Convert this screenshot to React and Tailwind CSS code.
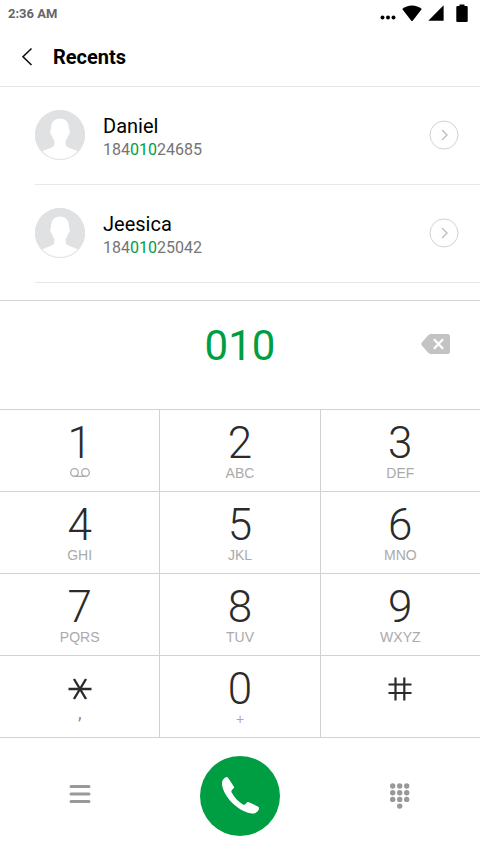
import React, { useState } from 'react';

const contacts = [
  { name: 'Daniel', number: '18401024685' },
  { name: 'Jeesica', number: '18401025042' },
];

const keys = [
  { digit: '1', letters: 'voicemail' },
  { digit: '2', letters: 'ABC' },
  { digit: '3', letters: 'DEF' },
  { digit: '4', letters: 'GHI' },
  { digit: '5', letters: 'JKL' },
  { digit: '6', letters: 'MNO' },
  { digit: '7', letters: 'PQRS' },
  { digit: '8', letters: 'TUV' },
  { digit: '9', letters: 'WXYZ' },
  { digit: '*', letters: ',' },
  { digit: '0', letters: '+' },
  { digit: '#', letters: '' },
];

const StatusBar = () => (
  <div className="flex h-7 items-center justify-between pl-2 pr-3">
    <span className="text-[13px] font-bold text-[#666666]">2:36 AM</span>
    <div className="flex items-center text-black">
      <svg className="mr-1.5 h-4 w-4" viewBox="0 0 16 16" fill="currentColor">
        <circle cx="2.5" cy="11.5" r="2" />
        <circle cx="8" cy="11.5" r="2" />
        <circle cx="13.5" cy="11.5" r="2" />
      </svg>
      <svg className="mr-1.5 h-5 w-5" viewBox="0 0 20 20" fill="currentColor">
        <path d="M0.2 5C5.5 0.2 14.5 0.2 19.8 5L10.9 16.4Q10 17.4 9.1 16.4Z" />
      </svg>
      <svg className="mr-3 h-5 w-4" viewBox="0 0 16 20" fill="currentColor">
        <path d="M15.6 1.3V16.8H0.3Z" />
      </svg>
      <svg className="h-5 w-3" viewBox="0 0 12 20" fill="currentColor">
        <path d="M3.5 0.5h5v1.5H10.5Q11.7 2 11.7 3.2V17Q11.7 18 10.7 18H1.3Q0.3 18 0.3 17V3.2Q0.3 2 1.5 2H3.5Z" />
      </svg>
    </div>
  </div>
);

const Avatar = () => (
  <svg className="h-[50px] w-[50px] shrink-0" viewBox="0 0 50 50">
    <circle cx="25" cy="25" r="25" fill="#dfe1e3" />
    <path
      d="M25 8.5C19 8.5 15.8 12.5 16.1 19.5C14.7 20 15 24.5 16.8 25.5C17.3 28 18.3 29.5 19.3 30.5V34C19.3 36.2 18 37 15 38.2C11 39.8 8 41 6.5 41.2A24.4 24.4 0 0 0 43.5 41.2C42 41 39 39.8 35 38.2C32 37 30.7 36.2 30.7 34V30.5C31.7 29.5 32.7 28 33.2 25.5C35 24.5 35.3 20 33.9 19.5C34.2 12.5 31 8.5 25 8.5Z"
      fill="#ffffff"
    />
    <circle cx="25" cy="25" r="24.5" fill="none" stroke="#dfe1e3" />
  </svg>
);

const MatchedNumber = ({ number, query }) => {
  const at = query ? number.indexOf(query) : -1;
  if (at < 0) return number;

  return (
    <>
      {number.slice(0, at)}
      <span className="text-[#009e42]">{query}</span>
      {number.slice(at + query.length)}
    </>
  );
};

const ContactRow = ({ contact, query }) => (
  <li className="ml-[35px] flex h-[98px] items-center border-b border-[#e8e8e8] pb-0.5 pr-[21px]">
    <Avatar />
    <div className="ml-[18px] flex-1 pt-1.5">
      <p className="text-xl leading-6 text-black">{contact.name}</p>
      <p className="text-base leading-6 text-[#757575]">
        <MatchedNumber number={contact.number} query={query} />
      </p>
    </div>
    <button aria-label={`${contact.name} details`} className="cursor-pointer">
      <svg className="h-[30px] w-[30px]" viewBox="0 0 30 30" fill="none">
        <circle cx="15" cy="15" r="14" stroke="#d2d2d2" strokeWidth="1" />
        <path d="M13 10L18 15L13 20" stroke="#bdbdbd" strokeWidth="1.4" />
      </svg>
    </button>
  </li>
);

const KeySymbol = ({ digit }) => {
  if (digit === '*') {
    return (
      <svg className="h-11 w-6" viewBox="0 0 24 44" fill="none" stroke="#2b2b2b" strokeWidth="2.4">
        <path d="M0.5 22H23.5M6 12L18 32M18 12L6 32" />
      </svg>
    );
  }
  if (digit === '#') {
    return (
      <svg className="h-11 w-6" viewBox="0 0 24 44" fill="none" stroke="#2b2b2b" strokeWidth="2.2">
        <path d="M0.5 17.5H23.5M0.5 26H23.5M7.5 10.5V33.5M16.3 10.5V33.5" />
      </svg>
    );
  }
  return <span className="text-[44px] leading-11 font-light text-[#2b2b2b]">{digit}</span>;
};

const KeyLetters = ({ letters }) => {
  if (letters === 'voicemail') {
    return (
      <svg className="h-4 w-5" viewBox="0 0 20 16" fill="none" stroke="#aaaaaa" strokeWidth="1.3">
        <circle cx="4.5" cy="7.5" r="3.8" />
        <circle cx="15.5" cy="7.5" r="3.8" />
        <path d="M4.5 11.3H15.5" />
      </svg>
    );
  }
  if (letters === ',') {
    return <span className="h-4 text-lg leading-1 text-[#888888]">,</span>;
  }
  return (
    <span className="h-4 font-['Liberation_Sans',sans-serif] text-sm leading-4 text-[#aaaaaa]">
      {letters}
    </span>
  );
};

export default function App() {
  const [query, setQuery] = useState('010');

  return (
    <div className="min-h-screen bg-white font-['Roboto',sans-serif]">
      <StatusBar />

      <header className="flex h-[59px] items-center border-b border-[#e4e4e4] pl-5">
        <button aria-label="Back" className="cursor-pointer">
          <svg className="h-5 w-4" viewBox="0 0 16 20" fill="none" stroke="#111111" strokeWidth="1.6">
            <path d="M11.5 1.5L3 9.7L11.5 18" />
          </svg>
        </button>
        <h1 className="ml-[17px] text-xl font-bold text-black">Recents</h1>
      </header>

      <ul className="pb-[17px]">
        {contacts.map((contact) => (
          <ContactRow key={contact.number} contact={contact} query={query} />
        ))}
      </ul>

      <div className="grid h-[109px] grid-cols-[1fr_auto_1fr] items-start border-t border-[#d6d6d6] pt-[21px]">
        <output className="col-start-2 text-[42px] leading-12 text-[#009e42]">{query}</output>
        <button
          aria-label="Delete digit"
          onClick={() => setQuery(query.slice(0, -1))}
          className="mr-[30px] mt-[11px] cursor-pointer justify-self-end"
        >
          <svg className="h-[22px] w-[29px]" viewBox="0 0 29 22">
            <path
              d="M10 1H26.5Q29 1 29 3.5V18.5Q29 21 26.5 21H10Q8.5 21 7.5 19.9L1 12.7Q-0.4 11 1 9.3L7.5 2.1Q8.5 1 10 1Z"
              fill="#c3c3c3"
            />
            <path
              d="M13.5 6.8L21.5 15.2M21.5 6.8L13.5 15.2"
              stroke="#ffffff"
              strokeWidth="2.2"
              strokeLinecap="round"
            />
          </svg>
        </button>
      </div>

      <div className="grid grid-cols-3 gap-px border-y border-[#d2d2d2] bg-[#d2d2d2]">
        {keys.map((key) => (
          <button
            key={key.digit}
            onClick={() => setQuery(query + key.digit)}
            className="flex cursor-pointer flex-col items-center bg-white pb-2.5 pt-[11px] active:bg-gray-100"
          >
            <KeySymbol digit={key.digit} />
            <KeyLetters letters={key.letters} />
          </button>
        ))}
      </div>

      <nav className="grid grid-cols-3 items-center justify-items-center pt-[18px]">
        <button aria-label="Menu" className="cursor-pointer">
          <svg className="h-6 w-6" viewBox="0 0 24 24" stroke="#999999" strokeWidth="3" strokeLinecap="round">
            <path d="M3 2.5H21M3 10H21M3 17.5H21" />
          </svg>
        </button>
        <button
          aria-label="Call"
          className="flex h-20 w-20 cursor-pointer items-center justify-center rounded-full bg-[#009e42]"
        >
          <svg className="h-10 w-10" viewBox="0 0 40 40" fill="#ffffff">
            <path d="M5.2 1.5C6.5 0.6 7.6 0.8 8.2 1.9L13.8 10.5C14.4 11.5 14 12.2 13 13C11.4 14.3 11 15.2 11.8 16.7C14.5 21.5 18.5 25.7 23 28.4C24.2 29.1 24.9 28.8 25.8 27.7C26.8 26.3 27.7 25.7 28.9 26.2L37.9 30.5C39.2 31.2 39.3 32.2 38.8 33.5C37.4 36.9 34 38 30.5 37.3C17.5 34.8 3.5 20.5 2 8.5C1.7 5.500 2.9 3.1 5.2 1.5Z" />
          </svg>
        </button>
        <button aria-label="Toggle dial pad" className="cursor-pointer">
          <svg className="h-7 w-5" viewBox="0 0 20 28" fill="#999999">
            {[2.7, 9.7, 16.7].map((x) =>
              [4, 10.7, 17.4].map((y) => <circle key={`${x}-${y}`} cx={x} cy={y} r="2.7" />)
            )}
            <circle cx="9.7" cy="24.1" r="2.7" />
          </svg>
        </button>
      </nav>
    </div>
  );
}
